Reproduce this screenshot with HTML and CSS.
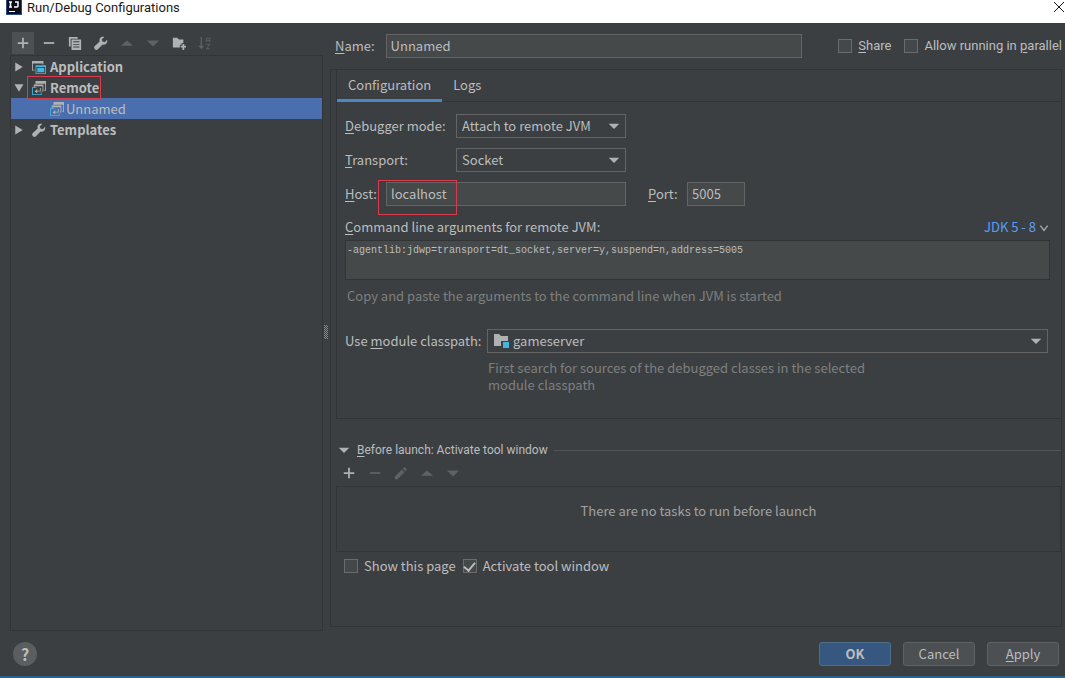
FILE: index.html
```html
<!DOCTYPE html>
<html lang="en">
<head>
<meta charset="utf-8">
<title>Run/Debug Configurations</title>
<link rel="stylesheet" href="styles.css">
</head>
<body>
<svg class="defs" aria-hidden="true">
  <symbol id="plus" viewBox="0 0 16 16"><path d="M7 2h2v5h5v2H9v5H7V9H2V7h5z"/></symbol>
  <symbol id="minus" viewBox="0 0 16 16"><path d="M2 7h12v2H2z"/></symbol>
  <symbol id="wrench" viewBox="0 0 16 16"><path d="M15 4.200 12.200 7 9.600 6.200 9 3.800l2.800-2.800C10 .4 8 1 7 2.400c-.8 1.100-.9 2.600-.5 3.800L1 11.500A2.200 2.200 0 0 0 4.500 15l5.300-5.300c1.300.5 2.800.2 3.900-.8 1.300-1.200 1.700-3.100 1.300-4.700z"/></symbol>
  <symbol id="up" viewBox="0 0 16 16"><path d="m1 11 7-6 7 6z"/></symbol>
  <symbol id="down" viewBox="0 0 16 16"><path d="m1 5 7 7 7-7z"/></symbol>
  <symbol id="right" viewBox="0 0 16 16"><path d="m3 2 10 6-10 6z"/></symbol>
  <symbol id="treedown" viewBox="0 0 16 16"><path d="M2 3h12L8 13z"/></symbol>
  <symbol id="remote" viewBox="0 0 16 16"><path d="M4 0h12v11h-2v-1h1V3H5v1H4z"/><path d="M2 4h11v8h-2v-1h1V6H3v2H2z"/><path class="cyan" d="M0 7h5v1H1v7h9v-2h1v3H0z"/><path d="M3 12l3-3v2h3V8h1v4H6v2z"/></symbol>
</svg>
<main class="window">
  <header class="titlebar">
    <svg class="logo" viewBox="0 0 16 15" aria-hidden="true"><path fill="#2b4c8c" d="M0 0h16v15H0z"/><path fill="#0b0d18" d="M1 0h14v14H1z"/><path fill="none" stroke="#fff" stroke-width="1.500" d="M3 2h3M4.500 2v5M3 7h3M9 2h3v4q0 1-1 1H8"/><path fill="#fff" d="M3 11h6v1H3z"/></svg>
    <h1>Run/Debug Configurations</h1>
    <button class="close" aria-label="Close"><svg viewBox="0 0 12 12"><path d="m1 1 10 10M11 1 1 11"/></svg></button>
  </header>
  <div class="body">
    <aside class="side">
      <div class="toolbar">
        <button class="tool on" aria-label="Add"><svg><use href="#plus"/></svg></button>
        <button class="tool" aria-label="Remove"><svg><use href="#minus"/></svg></button>
        <button class="tool" aria-label="Copy"><svg viewBox="0 0 16 16"><path d="M1 1h10v2H3v9H1z"/><path fill-rule="evenodd" d="M4 4h11v12H4zM6 6v1h7V6zm0 3v1h7V9zm0 3v1h7v-1z"/></svg></button>
        <button class="tool" aria-label="Edit defaults"><svg><use href="#wrench"/></svg></button>
        <button class="tool" aria-label="Move up" disabled><svg><use href="#up"/></svg></button>
        <button class="tool" aria-label="Move down" disabled><svg><use href="#down"/></svg></button>
        <button class="tool" aria-label="New folder"><svg viewBox="0 0 16 16"><path d="M1 2h5l2 2h5v4h-2v2H9v3H1z"/><path d="M12 9h2v2h2v2h-2v3h-2v-3h-2v-2h2z"/></svg></button>
        <button class="tool" aria-label="Sort" disabled><svg viewBox="0 0 16 16"><path d="M3 1h1.500v10H7l-3.200 4L.5 11H3z"/><path class="line" d="M9.500 7V2.500h4V7M9.500 5h4M9.500 9.500h4l-4 5h4"/></svg></button>
      </div>
      <ul class="tree">
        <li><svg class="arrow"><use href="#right"/></svg><svg class="kind" viewBox="0 0 16 16"><path d="M0 1h13v4h-1V4H1v7h2v1H0z"/><path class="cyan" fill-rule="evenodd" d="M4 6h12v10H4zM5 8v7h10V8z"/><path class="cyan" d="M6 9h8v5H6z"/></svg><b>Application</b></li>
        <li><svg class="arrow"><use href="#treedown"/></svg><span class="marked"><svg class="kind"><use href="#remote"/></svg><b>Remote</b></span></li>
        <li class="child selected"><svg class="kind"><use href="#remote"/></svg><span>Unnamed</span></li>
        <li><svg class="arrow"><use href="#right"/></svg><svg class="kind"><use href="#wrench"/></svg><b>Templates</b></li>
      </ul>
    </aside>
    <div class="grip" aria-hidden="true"></div>
    <section class="main">
      <div class="namerow">
        <label for="name"><u>N</u>ame:</label>
        <input class="field" id="name" value="Unnamed">
        <label class="check share"><input type="checkbox"><span><u>S</u>hare</span></label>
        <label class="check"><input type="checkbox"><span>Allow running in <u>p</u>arallel</span></label>
      </div>
      <div class="panel">
        <div class="config">
          <nav class="tabs"><button class="tab active">Configuration</button><button class="tab">Logs</button></nav>
          <form class="form">
            <div class="row"><label class="lab" for="mode"><u>D</u>ebugger mode:</label><span class="combo"><select id="mode"><option>Attach to remote JVM</option></select><svg><use href="#down"/></svg></span></div>
            <div class="row"><label class="lab" for="transport"><u>T</u>ransport:</label><span class="combo"><select id="transport"><option>Socket</option></select><svg><use href="#down"/></svg></span></div>
            <div class="row"><label class="hostlab" for="host"><u>H</u>ost:</label><span class="hostbox"><input class="field" id="host" value="localhost"></span><label class="portlab" for="port"><u>P</u>ort:</label><input class="field port" id="port" value="5005"></div>
            <div class="cmdhead"><label for="cmd"><u>C</u>ommand line arguments for remote JVM:</label><a href="#jdk">JDK 5 - 8<svg viewBox="0 0 10 10"><path class="line" d="m2 3 3 4 3-4"/></svg></a></div>
            <textarea class="cmd" id="cmd" spellcheck="false">-agentlib:jdwp=transport=dt_socket,server=y,suspend=n,address=5005</textarea>
            <p class="hint">Copy and paste the arguments to the command line when JVM is started</p>
            <div class="module"><label for="module">Use <u>m</u>odule classpath:</label><span class="combo wide"><svg class="folder" viewBox="0 0 16 16"><path d="M1 1h5l2 2h7v5H8v5H1z"/><path class="blue" d="M10 9h6v6h-6z"/></svg><select id="module"><option>gameserver</option></select><svg><use href="#down"/></svg></span>
            <p class="hint2">First search for sources of the debugged classes in the selected module classpath</p></div>
          </form>
        </div>
        <div class="launch">
          <svg class="arrow"><use href="#down"/></svg><h2><u>B</u>efore launch: Activate tool window</h2><hr>
        </div>
        <div class="toolbar small">
          <button class="tool" aria-label="Add task"><svg><use href="#plus"/></svg></button>
          <button class="tool" aria-label="Remove task" disabled><svg><use href="#minus"/></svg></button>
          <button class="tool" aria-label="Edit task" disabled><svg viewBox="0 0 16 16"><path d="m1 12 8-8 3 3-8 8H1zM10 3l2-2 3 3-2 2z"/></svg></button>
          <button class="tool" aria-label="Task up" disabled><svg><use href="#up"/></svg></button>
          <button class="tool" aria-label="Task down" disabled><svg><use href="#down"/></svg></button>
        </div>
        <div class="tasks">There are no tasks to run before launch</div>
        <div class="opts">
          <label class="check"><input type="checkbox"><span>Show this page</span></label>
          <label class="check"><input type="checkbox" checked><span>Activate tool window</span></label>
        </div>
      </div>
    </section>
  </div>
  <footer class="foot">
    <button class="help" aria-label="Help">?</button>
    <button class="btn primary">OK</button>
    <button class="btn">Cancel</button>
    <button class="btn"><span><u>A</u>pply</span></button>
  </footer>
</main>
</body>
</html>
```

FILE: styles.css
```css
* { box-sizing: border-box; }
body { margin: 0; background: #3c3f41; color: #bbbdbf; font: 13px/18px "Noto Sans CJK SC", "Open Sans", sans-serif; }
button, input, select, textarea { font: inherit; color: inherit; margin: 0; }
button { padding: 0; border: 0; background: none; }
h1, h2, p, ul { margin: 0; padding: 0; font-size: inherit; font-weight: 400; }
svg { width: 16px; height: 16px; fill: #afb1b3; flex: none; }
u { text-underline-offset: 2px; }
.defs { position: absolute; width: 0; height: 0; }
.cyan { fill: #40b6e0; }
.blue { fill: #40b6e0; }
.line { fill: none; stroke: #afb1b3; }
.window { min-height: 100vh; display: flex; flex-direction: column; border-bottom: 2px solid #2d628f; }
.titlebar { height: 23px; display: flex; align-items: flex-start; background: #fff; color: #1b1b1b; padding-left: 6px; }
.titlebar h1 { margin-left: 5px; flex: 1; line-height: 16px; }
.titlebar h1, .launch h2, .namerow .check { font-family: Roboto, "Open Sans", sans-serif; }
.logo { width: 16px; height: 15px; }
.close { width: 12px; height: 14px; }
.close svg { display: block; width: 12px; height: 14px; stroke: #111; fill: none; }
.body { flex: 1; display: flex; padding: 8px 3px 0 10px; }
.side { flex: 0 0 313px; display: flex; flex-direction: column; margin-bottom: 2px; }
.toolbar { display: flex; height: 24px; gap: 4px; padding-left: 2px; align-items: center; }
.tool { width: 22px; height: 22px; display: grid; place-items: center; }
.tool svg { width: 14px; height: 14px; }
.tool:disabled svg { opacity: .3; }
.on { background: #4c5052; }
.tree { flex: 1; list-style: none; border: 1px solid #323537; }
.tree li { height: 21px; display: flex; align-items: center; }
.arrow { width: 12px; height: 12px; margin: 0 6px 0 2px; }
.kind { width: 14px; height: 14px; margin-right: 4px; }
.tree li > .kind { margin-left: 1px; }
.tree b { font-weight: 700; }
.marked { display: flex; align-items: center; height: 23px; border: 1px solid #d83b4b; padding: 0 1px 0 4px; margin-left: -4px; z-index: 1; }
.tree .child { padding-left: 38px; }
.child .kind { margin-right: 2px; }
.selected { background: #4b6eaf; }
.grip { align-self: center; flex: 0 0 7px; height: 14px; background: conic-gradient(#888 25%, transparent 0 50%, #888 0 75%, transparent 0) 0 0 / 2px 2px; background-clip: content-box; padding: 0 2px 0 1px; }
.main { flex: 1; min-width: 0; display: flex; flex-direction: column; margin-bottom: 6px; }
.namerow { display: flex; align-items: center; height: 30px; padding: 0 0 0 5px; white-space: nowrap; }
.field { height: 24px; border: 1px solid #646464; background: #45494a; padding: 0 4px 1px; min-width: 0; outline: 0; border-radius: 0; }
.namerow .field { flex: 1; margin-left: 11px; }
.check { display: flex; align-items: center; gap: 6px; }
.check input { appearance: none; width: 14px; height: 14px; border: 1px solid #6b6b6b; background: #43494a; display: grid; place-items: center; flex: none; }
.check input:checked::before { content: ""; width: 5px; height: 9px; border: solid #bbb; border-width: 0 2px 2px 0; transform: rotate(40deg); margin-bottom: 2px; }
.share { margin: 0 13px 0 36px; }
.panel { flex: 1; border: 1px solid #323537; margin-top: 8px; padding-left: 5px; }
.config { border: solid #323537; border-width: 0 0 1px 1px; height: 349px; }
.tabs { display: flex; height: 32px; border-bottom: 1px solid #323537; }
.tab { padding: 0 11px 3px; height: 32px; }
.active { border-bottom: 3px solid #4a88c7; padding-bottom: 0; }
.form { padding: 7px 11px 0 8px; }
.row { display: flex; align-items: center; height: 34px; }
.lab { width: 111px; }
.combo { display: flex; align-items: center; width: 170px; height: 24px; border: 1px solid #646464; padding: 0 5px; }
.combo select { appearance: none; flex: 1; min-width: 0; border: 0; background: transparent; padding: 0; outline: 0; }
.combo svg { width: 12px; height: 12px; }
.hostlab { width: 33px; }
.hostbox { width: 248px; padding-left: 8px; position: relative; }
.hostbox .field { width: 100%; display: block; }
.hostbox::after { content: ""; position: absolute; left: 0; top: -2px; width: 77px; height: 33px; border: 1px solid #d83b4b; pointer-events: none; }
.portlab { width: 39px; margin-left: 22px; }
.port { width: 58px; }
.cmdhead { display: flex; justify-content: space-between; height: 29px; padding-top: 7px; }
.cmdhead a { color: #589df6; text-decoration: none; }
.cmdhead a svg { width: 12px; height: 12px; vertical-align: -2px; margin-left: 2px; }
.cmd { display: block; width: 100%; height: 40px; resize: none; border: 1px solid #323537; background: #45494a; padding: 3px 1px; font: 10px/14px "Liberation Mono", monospace; outline: 0; }
.hint, .hint2 { color: #7d7f80; }
.hint { padding: 7px 2px 0; }
.module { display: grid; grid-template-columns: 142px 1fr; align-items: center; margin-top: 24px; padding-right: 2px; }
.wide { width: 100%; }
.combo .folder { width: 16px; height: 16px; margin-right: 4px; }
.hint2 { grid-column: 2; max-width: 388px; padding: 6px 1px; line-height: 17px; }
.launch { display: flex; align-items: center; margin-top: 22px; height: 18px; }
.launch h2 { font-size: 12px; }
.launch hr { flex: 1; border: 0; border-top: 1px solid #515557; margin: 0 0 0 6px; }
.launch .arrow { margin-right: 7px; }
.small { height: 27px; }
.tasks { border: 1px solid #323537; height: 66px; text-align: center; padding-top: 15px; color: #a0a2a3; }
.opts { display: flex; gap: 7px; padding: 5px 8px; }
.foot { height: 43px; display: flex; align-items: center; gap: 12px; padding: 0 6px 1px 13px; }
.help { width: 24px; height: 24px; border-radius: 50%; background: #5b5e60; font-weight: 700; font-size: 16px; margin-right: auto; }
.btn { width: 72px; height: 24px; border: 1px solid #5e6263; background: #4c5052; border-radius: 3px; }
.primary { background: #365880; border-color: #4c708c; font-weight: 700; }
```
